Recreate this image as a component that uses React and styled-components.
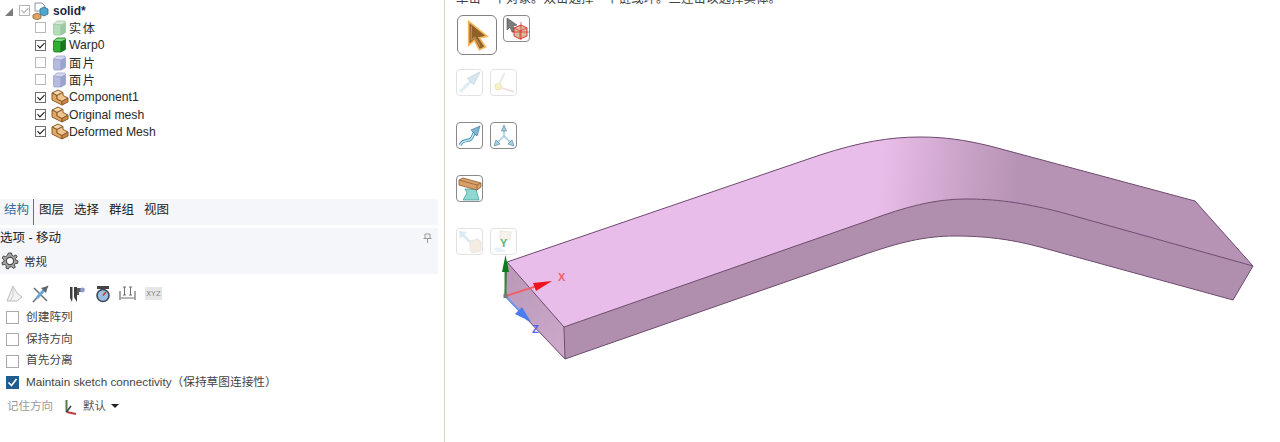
import styled, { createGlobalStyle } from "styled-components";

const GlobalStyle = createGlobalStyle`
  html, body {
    margin: 0;
    height: 442px;
    overflow: hidden;
    background: #fff;
  }
  body {
    font-family: "Liberation Sans", "Noto Sans CJK SC", sans-serif;
  }
`;

const treeItems = [
  { label: "实体", kind: "solidOff", checked: false, cjk: true },
  { label: "Warp0", kind: "solidOn", checked: true },
  { label: "面片", kind: "surface", checked: false, cjk: true },
  { label: "面片", kind: "surface", checked: false, cjk: true },
  { label: "Component1", kind: "component", checked: true },
  { label: "Original mesh", kind: "component", checked: true },
  { label: "Deformed Mesh", kind: "component", checked: true },
];

const tabs = ["结构", "图层", "选择", "群组", "视图"];

const optionChecks = [
  { label: "创建阵列", checked: false },
  { label: "保持方向", checked: false },
  { label: "首先分离", checked: false },
  { label: "Maintain sketch connectivity（保持草图连接性）", checked: true },
];

function CubeIcon({ kind }) {
  const colors = {
    solidOff: ["#d6ecd8", "#b5dcb9", "#9dc9a2"],
    solidOn: ["#7bdc7b", "#2fb02f", "#17761f"],
    surface: ["#d5d9ee", "#b4bbdf", "#9aa2cf"],
  }[kind];
  return (
    <svg width="15" height="16" viewBox="0 0 15 16">
      <path d="M1.5 4 L5 1 H13 L13.5 3 L9 5 H3 Z" fill={colors[0]} stroke={colors[2]} strokeWidth="0.8" />
      <path d="M1.5 4 L9 5 V15 H3 Q1.5 15 1.5 13.5 Z" fill={colors[1]} stroke={colors[2]} strokeWidth="0.8" />
      <path d="M9 5 L13.5 3 V12.5 L9 15 Z" fill={colors[2]} stroke={colors[2]} strokeWidth="0.8" />
    </svg>
  );
}

function ComponentIcon() {
  return (
    <svg width="18" height="17" viewBox="0 0 18 17">
      <path d="M1 4 L7 1 L12 3.5 L6 6.5 Z" fill="#f3d9b3" stroke="#8c5a25" strokeWidth="1" />
      <path d="M1 4 L6 6.5 V10 L11 12.5 V16 L1 11 Z" fill="#e2a765" stroke="#8c5a25" strokeWidth="1" />
      <path d="M6 6.5 L12 3.5 V6.5 L17 9 L11 12.5 L6 10 Z" fill="#f0c48f" stroke="#8c5a25" strokeWidth="1" />
      <path d="M11 12.5 L17 9 V13 L11 16 Z" fill="#c98a48" stroke="#8c5a25" strokeWidth="1" />
    </svg>
  );
}

function SolidRootIcon() {
  return (
    <svg width="17" height="18" viewBox="0 0 17 18">
      <path d="M3 1 H10 L13 4 V9 H3 Z" fill="#fff" stroke="#8a93a8" strokeWidth="1" />
      <path d="M8 7 L12 5 L16 7 V12 L12 14 L8 12 Z" fill="#4fa6cf" stroke="#2c6f96" strokeWidth="0.8" />
      <path d="M1 13 L5 11 L9 13 V16 L5 18 L1 16 Z" fill="#d9a66c" stroke="#8c5a25" strokeWidth="0.8" />
    </svg>
  );
}

function GearIcon() {
  return (
    <svg width="18" height="18" viewBox="0 0 18 18">
      <path
        d="M7.5 1 H10.5 L11 3.4 L12.8 4.2 L14.9 2.9 L16.1 4.9 L14.4 6.5 L14.8 8.2 L17 9 L16.6 11.4 L14.3 11.5 L13.3 13.1 L14.3 15.3 L12.2 16.4 L10.7 14.7 L8.6 14.9 L7.3 17 L5 16.1 L5.3 13.7 L3.9 12.4 L1.5 12.9 L0.9 10.6 L3 9.5 L3 7.6 L1.1 6.1 L2.4 4 L4.7 4.7 L6.2 3.6 Z"
        fill="#a5a5a5"
        stroke="#4a4a4a"
        strokeWidth="1"
      />
      <circle cx="9" cy="9" r="3.6" fill="#fff" stroke="#4a4a4a" strokeWidth="1.2" />
    </svg>
  );
}

function PinIcon() {
  return (
    <svg width="9" height="10" viewBox="0 0 9 10">
      <path d="M2 1 H7 V5.5 H2 Z M0.5 5.5 H8.5 M4.5 5.5 V10" fill="none" stroke="#9a9a9a" strokeWidth="1" />
    </svg>
  );
}

function ToolSketch() {
  return (
    <svg width="17" height="18" viewBox="0 0 17 18">
      <path d="M1 16 L7 1 L11 8 L16 12 L11 16 Z" fill="#f2f2f2" stroke="#bdbdbd" strokeWidth="1" />
      <path d="M7 1 L7 11 L4 16" fill="none" stroke="#c9c9c9" strokeWidth="1" />
    </svg>
  );
}

function ToolArrowCross() {
  return (
    <svg width="17" height="18" viewBox="0 0 17 18">
      <path d="M2 3 L15 16 M1 17 L16 1" stroke="#6d747c" strokeWidth="1.6" />
      <path d="M5 13 L13 4" stroke="#6aa6d6" strokeWidth="3" />
      <path d="M16 1 L9 3 L14 8 Z" fill="#5d6670" />
    </svg>
  );
}

function ToolCaliper() {
  return (
    <svg width="18" height="18" viewBox="0 0 18 18">
      <path d="M1 2 H3.5 V13 L3 17 L1 13 Z M5 2 H8 V17 L6 14 L5 12 Z" fill="#3f3f3f" />
      <path d="M8 3 H15 V7 H10 V10 H8 Z" fill="#5b5b5b" />
      <circle cx="13.5" cy="5" r="2.4" fill="#8c9cd0" />
    </svg>
  );
}

function ToolGauge() {
  return (
    <svg width="14" height="18" viewBox="0 0 14 18">
      <path d="M1 1 H13 V4 H1 Z" fill="#444" />
      <circle cx="7" cy="10.5" r="6" fill="#9ec0e0" stroke="#3a4a5c" strokeWidth="1.6" />
      <path d="M7 10.5 L10 7" stroke="#c33" strokeWidth="1.4" />
    </svg>
  );
}

function ToolDimension() {
  return (
    <svg width="17" height="17" viewBox="0 0 17 17">
      <path d="M1 6 V15 M16 6 V15 M2 13 H15" fill="none" stroke="#6f6f6f" strokeWidth="1.2" />
      <path d="M5.5 2 V10 M11.5 2 V10 M4 2 H7 M10 2 H13 M4 10 H7 M10 10 H13" fill="none" stroke="#6f6f6f" strokeWidth="1" />
    </svg>
  );
}

function AxisIcon() {
  return (
    <svg width="13" height="16" viewBox="0 0 13 16">
      <path d="M2.5 1 V13" stroke="#4e7f45" strokeWidth="2" />
      <path d="M2.5 13 L12 15" stroke="#c23a3a" strokeWidth="2" />
      <path d="M2.5 13 L7 7" stroke="#3a4650" strokeWidth="1.6" />
    </svg>
  );
}

function CursorIcon() {
  return (
    <svg width="23" height="31" viewBox="0 0 26 34">
      <path d="M3 1 L24 18 L15 19.5 L22 30 L15 33 L9.5 22.5 L3 28 Z" fill="#8f6128" stroke="#f7b55c" strokeWidth="1.8" />
      <path d="M6 6 L6 22 L10 19 L16 29" fill="none" stroke="#b98a4e" strokeWidth="1.6" />
    </svg>
  );
}

function BoxSelectIcon() {
  return (
    <svg width="24" height="23" viewBox="0 0 24 23">
      <path d="M2 1 L12 8 L8 9 L10 14 L7 15 L5 10 L2 13 Z" fill="#7d7d7d" stroke="#4e4e4e" strokeWidth="0.6" />
      <path d="M9 11 L16 8 L22 11 L22 19 L15 22 L9 19 Z" fill="#d8bc98" stroke="#e3242f" strokeWidth="0.9" />
      <path d="M9 11 L15 14 L22 11 M15 14 V22 M16 5 V23 M7 15 H24" fill="none" stroke="#e3242f" strokeWidth="0.7" />
    </svg>
  );
}

function PullIcon() {
  return (
    <svg width="23" height="23" viewBox="0 0 22 22" opacity="0.35">
      <path d="M2 20 L14 8" stroke="#a9cfe0" strokeWidth="3" />
      <path d="M21 1 L9 7 L15 13 Z" fill="#8bbcd3" stroke="#547d96" strokeWidth="0.7" />
    </svg>
  );
}

function MoveAxesIcon() {
  return (
    <svg width="23" height="23" viewBox="0 0 22 22" opacity="0.4">
      <circle cx="6" cy="15" r="3.2" fill="#e9e27a" stroke="#b0aa40" strokeWidth="0.6" />
      <path d="M7 12 L12 2" stroke="#a9d4a9" strokeWidth="1.6" />
      <path d="M9 16 L21 20" stroke="#e0a9a9" strokeWidth="1.6" />
    </svg>
  );
}

function SweepIcon() {
  return (
    <svg width="24" height="24" viewBox="0 0 24 24">
      <path d="M2 21 C6 14 10 18 13 15 C15 13 15 10 17 8" fill="none" stroke="#4d93b6" strokeWidth="3.2" />
      <path d="M2 21 C6 14 10 18 13 15 C15 13 15 10 17 8" fill="none" stroke="#bfe3f2" strokeWidth="1.5" />
      <path d="M22 2 L13 6 L19 12 Z" fill="#7db7d3" stroke="#2f6f90" strokeWidth="0.6" />
    </svg>
  );
}

function TripleArrowIcon() {
  return (
    <svg width="24" height="24" viewBox="0 0 24 24">
      <path d="M12 12 V5 M12 12 L5 19 M12 12 L19 19" stroke="#a4cfe2" strokeWidth="1.6" />
      <path d="M12 1 L9.5 7 H14.5 Z M2 22 L4 16 L8 20 Z M22 22 L16 20 L20 16 Z" fill="#a4cfe2" stroke="#4f7f99" strokeWidth="0.6" />
    </svg>
  );
}

function AnvilIcon() {
  return (
    <svg width="24" height="25" viewBox="0 0 24 25">
      <path d="M7 13 L18 13 L21 24 L5 24 L9 17 Z" fill="#8fd8d0" stroke="#3b9a93" strokeWidth="0.7" />
      <path d="M1 4 L5 2 L23 7 L23 11 L19 14 L1 9 Z" fill="#d9a06a" stroke="#8a5a2c" strokeWidth="0.8" />
      <path d="M1 4 L19 9 L23 7 M19 9 V14" fill="none" stroke="#8a5a2c" strokeWidth="0.7" />
    </svg>
  );
}

function PullBoxIcon() {
  return (
    <svg width="24" height="24" viewBox="0 0 24 24" opacity="0.3">
      <path d="M12 11 L20 9 L23 12 V21 L14 23 L12 20 Z" fill="#e0c7a6" stroke="#a88" strokeWidth="0.6" />
      <path d="M2 2 L13 13" stroke="#8ebfd4" strokeWidth="3" />
      <path d="M1 1 L9 2 L2 9 Z" fill="#8ebfd4" />
    </svg>
  );
}

function YAnchorIcon() {
  return (
    <svg width="24" height="24" viewBox="0 0 24 24" opacity="0.55">
      <path d="M8 1 L19 2 L18 10 L8 9 Z" fill="#efe6da" stroke="#cfc3b2" strokeWidth="0.6" />
      <path d="M2 18 Q10 16 14 22 L4 22 Z" fill="#d7e7ef" />
    </svg>
  );
}

function Tree() {
  return (
    <TreeBox>
      <TreeRow>
        <Expander />
        <TreeCheck $checked $faded $root />
        <SolidRootIcon />
        <RootLabel>solid*</RootLabel>
      </TreeRow>
      {treeItems.map((item, i) => (
        <TreeRow key={i} $child>
          <TreeCheck $checked={item.checked} />
          <IconSlot>{item.kind === "component" ? <ComponentIcon /> : <CubeIcon kind={item.kind} />}</IconSlot>
          <TreeLabel $cjk={item.cjk}>{item.label}</TreeLabel>
        </TreeRow>
      ))}
    </TreeBox>
  );
}

export default function App() {
  return (
    <Page>
      <GlobalStyle />
      <LeftPanel>
        <Tree />
        <TabBar>
          {tabs.map((t, i) => (
            <Tab key={t} $active={i === 0}>{t}</Tab>
          ))}
        </TabBar>
        <OptionsHeader>
          <OptionsTitle>选项 - 移动</OptionsTitle>
          <PinIcon />
        </OptionsHeader>
        <SectionRow>
          <GearIcon />
          <SectionLabel>常规</SectionLabel>
        </SectionRow>
        <ToolRow>
          <ToolGroup>
            <ToolSketch />
            <ToolArrowCross />
          </ToolGroup>
          <ToolGroup>
            <ToolCaliper />
            <ToolGauge />
            <ToolDimension />
            <XyzBadge>XYZ</XyzBadge>
          </ToolGroup>
        </ToolRow>
        <CheckList>
          {optionChecks.map((c) => (
            <CheckRow key={c.label}>
              <OptionBox $checked={c.checked}>
                {c.checked && (
                  <svg width="13" height="13" viewBox="0 0 13 13">
                    <path d="M2.5 6.5 L5.5 9.5 L10.5 3" fill="none" stroke="#fff" strokeWidth="1.6" />
                  </svg>
                )}
              </OptionBox>
              <OptionText>{c.label}</OptionText>
            </CheckRow>
          ))}
        </CheckList>
        <DirectionRow>
          <DirectionLabel>记住方向</DirectionLabel>
          <AxisIcon />
          <DirectionValue>默认</DirectionValue>
          <Caret />
        </DirectionRow>
      </LeftPanel>
      <Viewport>
        <HintText>单击一个对象。双击选择一个链或环。三连击以选择实体。</HintText>
        <ModelDrawing width="836" height="442" viewBox="445 0 836 442">
          <defs>
            <linearGradient id="topFace" gradientUnits="userSpaceOnUse" x1="880" y1="180" x2="1015" y2="195">
              <stop offset="0" stopColor="#e9bde9" />
              <stop offset="0.5" stopColor="#cfa7cd" />
              <stop offset="1" stopColor="#b693b4" />
            </linearGradient>
            <linearGradient id="sideFace" gradientUnits="userSpaceOnUse" x1="507" y1="262" x2="565" y2="345">
              <stop offset="0" stopColor="#b997b7" />
              <stop offset="1" stopColor="#cba8c9" />
            </linearGradient>
          </defs>
          <path
            d="M507 262 L820 155 C860 142 890 137 920 137 C945 137 965 140 990 146 L1195 201 L1253 266 L1060 212 C1020 202 995 199 965 199 C935 199 905 207 870 220 L564 327 Z"
            fill="url(#topFace)"
          />
          <path
            d="M564 327 L870 220 C905 207 935 199 965 199 C995 199 1020 202 1060 212 L1253 266 L1233 300 L1040 247 C1010 239 985 236 955 236 C925 236 900 242 860 256 L565 359 Z"
            fill="#b08fae"
          />
          <path d="M507 262 L564 327 L565 359 L505 296 Z" fill="url(#sideFace)" />
          <g fill="none" stroke="#6d4a6d" strokeWidth="1">
            <path d="M507 262 L820 155 C860 142 890 137 920 137 C945 137 965 140 990 146 L1195 201 L1253 266 L1233 300 L1040 247 C1010 239 985 236 955 236 C925 236 900 242 860 256 L565 359 L505 296 Z" />
            <path d="M507 262 L564 327 L870 220 C905 207 935 199 965 199 C995 199 1020 202 1060 212 L1253 266" />
            <path d="M564 327 L565 359" />
          </g>
          <path d="M505.5 296 V262" stroke="#2f8a2f" strokeWidth="2" />
          <path d="M505.5 255 L502 272 H509 Z" fill="#0f7a1c" />
          <path d="M505.5 296 L540 285" stroke="#f0606a" strokeWidth="2" />
          <path d="M552 281 L533 283 L536 291 Z" fill="#f0141e" />
          <path d="M505.5 296 L528 320" stroke="#6f97f0" strokeWidth="2" />
          <path d="M531 322 L522 307 L515 314 Z" fill="#4a7df0" />
          <rect x="503.5" y="294" width="4" height="4" fill="#777" />
          <AxisText x="558" y="281" fill="#f0606a">X</AxisText>
          <AxisText x="532" y="333" fill="#5a62e8">Z</AxisText>
        </ModelDrawing>
        <ToolColumn>
          <ToolButtons $after={14}>
            <BigToolButton><CursorIcon /></BigToolButton>
            <ToolButton $tight><BoxSelectIcon /></ToolButton>
          </ToolButtons>
          <ToolButtons>
            <ToolButton $off><PullIcon /></ToolButton>
            <ToolButton $off><MoveAxesIcon /></ToolButton>
          </ToolButtons>
          <ToolButtons>
            <ToolButton><SweepIcon /></ToolButton>
            <ToolButton><TripleArrowIcon /></ToolButton>
          </ToolButtons>
          <ToolButtons>
            <ToolButton><AnvilIcon /></ToolButton>
          </ToolButtons>
          <ToolButtons>
            <ToolButton $off><PullBoxIcon /></ToolButton>
            <ToolButton $off>
              <YAnchorIcon />
              <YLetter>Y</YLetter>
            </ToolButton>
          </ToolButtons>
        </ToolColumn>
      </Viewport>
    </Page>
  );
}

const Page = styled.div`
  display: flex;
  width: 1280px;
  height: 442px;
  overflow: hidden;
  background: #fff;
`;

const LeftPanel = styled.div`
  flex: 0 0 444px;
  display: flex;
  flex-direction: column;
  box-sizing: border-box;
  padding-right: 6px;
  font-size: 12.5px;
  color: #222;
`;

const TreeBox = styled.div`
  height: 199px;
  box-sizing: border-box;
  padding-top: 2px;
`;

const TreeRow = styled.div`
  height: 17.33px;
  display: flex;
  align-items: center;
  padding-left: ${(p) => (p.$child ? "35px" : "5px")};
`;

const Expander = styled.span`
  width: 0;
  height: 0;
  margin-right: 6px;
  margin-top: 2px;
  border-style: solid;
  border-width: 0 0 8px 8px;
  border-color: transparent transparent #7c7c7c transparent;
`;

const TreeCheck = styled.span`
  box-sizing: border-box;
  width: 11px;
  height: 11px;
  border: 1px solid ${(p) => (p.$faded ? "#b5b5b5" : p.$checked ? "#6f6f6f" : "#b9b9b9")};
  background: #fff;
  position: relative;
  margin-right: ${(p) => (p.$root ? "2px" : "4px")};
  &::after {
    content: ${(p) => (p.$checked ? '""' : "none")};
    position: absolute;
    left: 3px;
    top: 0;
    width: 3px;
    height: 6px;
    border: solid ${(p) => (p.$faded ? "#a9a9a9" : "#111")};
    border-width: 0 1.6px 1.6px 0;
    transform: rotate(45deg);
  }
`;

const IconSlot = styled.span`
  width: 19px;
  display: flex;
  justify-content: center;
`;

const RootLabel = styled.span`
  font-weight: 700;
  font-size: 12px;
  color: #1a2a44;
  margin-left: 4px;
`;

const TreeLabel = styled.span`
  font-size: 12.2px;
  letter-spacing: ${(p) => (p.$cjk ? "1.6px" : "0")};
  color: #2a2a2a;
`;

const TabBar = styled.div`
  height: 26px;
  display: flex;
  align-items: flex-start;
  background: #f5f6fa;
  margin-bottom: 3px;
`;

const Tab = styled.span`
  font-size: 12.5px;
  height: 100%;
  box-sizing: border-box;
  line-height: 22px;
  color: ${(p) => (p.$active ? "#336b95" : "#222")};
  padding: ${(p) => (p.$active ? "0 4px 0 4px" : "0 5px")};
  border-right: ${(p) => (p.$active ? "1px solid #4a7a9e" : "none")};
  &:nth-child(2) {
    padding-left: 5px;
  }
`;

const OptionsHeader = styled.div`
  height: 20px;
  display: flex;
  align-items: center;
  justify-content: space-between;
  padding-right: 6px;
  background: #f5f6fa;
  font-size: 12.5px;
`;

const OptionsTitle = styled.span`
  line-height: 16px;
  margin-top: -1px;
`;

const SectionRow = styled.div`
  height: 26px;
  display: flex;
  align-items: center;
  gap: 5px;
  padding-left: 1px;
  background: #f5f6fa;
`;

const SectionLabel = styled.span`
  font-size: 11.5px;
  color: #333;
`;

const ToolRow = styled.div`
  display: flex;
  align-items: center;
  gap: 20px;
  height: 19px;
  margin-top: 10px;
  padding-left: 6px;
`;

const ToolGroup = styled.div`
  display: flex;
  align-items: center;
  gap: 9px;
`;

const XyzBadge = styled.span`
  font-family: "Liberation Mono", monospace;
  font-size: 8px;
  line-height: 13px;
  width: 17px;
  text-align: center;
  background: #e6e6e6;
  color: #8a8a8a;
`;

const CheckList = styled.div`
  margin-top: 4px;
  display: flex;
  flex-direction: column;
`;

const CheckRow = styled.div`
  height: 21.7px;
  display: flex;
  align-items: center;
  gap: 7px;
  padding-left: 6px;
  font-size: 11.7px;
  color: #444;
`;

const OptionText = styled.span`
  line-height: 14px;
  margin-top: -2px;
`;

const OptionBox = styled.span`
  box-sizing: border-box;
  width: 13px;
  height: 13px;
  display: flex;
  border: 1px solid ${(p) => (p.$checked ? "#1f5c8f" : "#a9a9a9")};
  background: ${(p) => (p.$checked ? "#1f5c8f" : "#fff")};
  svg {
    margin: -1px;
  }
`;

const DirectionRow = styled.div`
  display: flex;
  align-items: center;
  height: 20px;
  margin-top: 3px;
  padding-left: 7px;
  font-size: 11.5px;
  line-height: 14px;
  span {
    margin-top: -2px;
  }
`;

const DirectionLabel = styled.span`
  color: #9a9a9a;
  margin-right: 11px;
`;

const DirectionValue = styled.span`
  color: #555;
  margin-left: 6px;
`;

const Caret = styled.span`
  width: 0;
  height: 0;
  margin-left: 5px;
  border-style: solid;
  border-width: 4px 4px 0 4px;
  border-color: #222 transparent transparent transparent;
`;

const Viewport = styled.div`
  flex: 1;
  position: relative;
  border-left: 1px solid #d9d7c4;
  box-sizing: border-box;
  overflow: hidden;
  padding: 15px 0 0 11px;
`;

const HintText = styled.div`
  position: absolute;
  left: 11px;
  top: -9px;
  font-size: 12.5px;
  line-height: 16px;
  color: #444;
  white-space: nowrap;
`;

const ModelDrawing = styled.svg`
  position: absolute;
  left: 0;
  top: 0;
`;

const AxisText = styled.text`
  font-family: "Liberation Sans", sans-serif;
  font-size: 11px;
  font-weight: 700;
`;

const ToolColumn = styled.div`
  position: relative;
  display: flex;
  flex-direction: column;
`;

const ToolButtons = styled.div`
  display: flex;
  align-items: flex-start;
  gap: 7px;
  margin-bottom: ${(p) => p.$after ?? 26}px;
`;

const ToolButton = styled.div`
  position: relative;
  box-sizing: border-box;
  width: 27px;
  height: 27px;
  display: flex;
  align-items: center;
  justify-content: center;
  border-radius: 4px;
  border: 1px solid ${(p) => (p.$off ? "#e2e2e2" : "#8a8a8a")};
  background: #fff;
  margin-left: ${(p) => (p.$tight ? "-1px" : "0")};
`;

const BigToolButton = styled(ToolButton)`
  width: 40px;
  height: 40px;
  border-radius: 6px;
  border-color: #808080;
  margin-left: 1px;
`;

const YLetter = styled.span`
  position: absolute;
  left: 9px;
  top: 8px;
  font-size: 11px;
  font-weight: 700;
  color: #5bb56a;
`;
